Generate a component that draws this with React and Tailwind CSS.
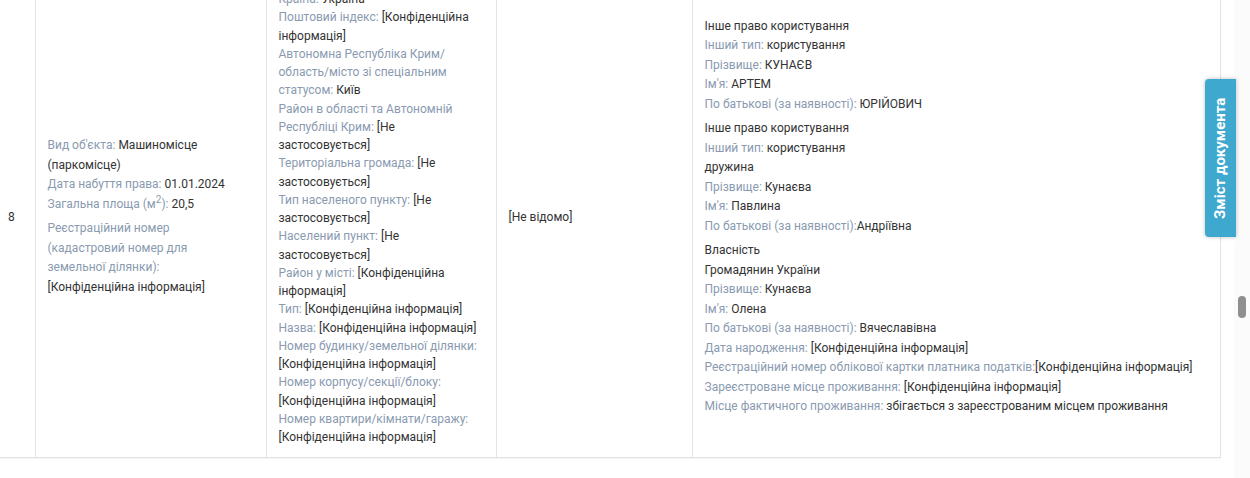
import React from 'react';

const L = ({ children }) => <span className="text-[#8a9ab0]">{children}</span>;

const col2 = [
  ['Країна: ', 'Україна'],
  ['Поштовий індекс: ', '[Конфіденційна інформація]'],
  ['Автономна Республіка Крим/ область/місто зі спеціальним статусом: ', 'Київ'],
  ['Район в області та Автономній Республіці Крим: ', '[Не застосовується]'],
  ['Територіальна громада: ', '[Не застосовується]'],
  ['Тип населеного пункту: ', '[Не застосовується]'],
  ['Населений пункт: ', '[Не застосовується]'],
  ['Район у місті: ', '[Конфіденційна інформація]'],
  ['Тип: ', '[Конфіденційна інформація]'],
  ['Назва: ', '[Конфіденційна інформація]'],
  ['Номер будинку/земельної ділянки: ', '[Конфіденційна інформація]'],
  ['Номер корпусу/секції/блоку: ', '[Конфіденційна інформація]'],
  ['Номер квартири/кімнати/гаражу: ', '[Конфіденційна інформація]'],
];

const owners = [
  [
    [null, 'Інше право користування'],
    ['Інший тип: ', 'користування'],
    ['Прізвище: ', 'КУНАЄВ'],
    ['Ім\'я: ', 'АРТЕМ'],
    ['По батькові (за наявності): ', 'ЮРІЙОВИЧ'],
  ],
  [
    [null, 'Інше право користування'],
    ['Інший тип: ', 'користування'],
    [null, 'дружина'],
    ['Прізвище: ', 'Кунаєва'],
    ['Ім\'я: ', 'Павлина'],
    ['По батькові (за наявності):', 'Андріївна'],
  ],
  [
    [null, 'Власність'],
    [null, 'Громадянин України'],
    ['Прізвище: ', 'Кунаєва'],
    ['Ім\'я: ', 'Олена'],
    ['По батькові (за наявності): ', 'Вячеславівна'],
    ['Дата народження: ', '[Конфіденційна інформація]'],
    ['Реєстраційний номер облікової картки платника податків:', '[Конфіденційна інформація]'],
    ['Зареєстроване місце проживання: ', '[Конфіденційна інформація]'],
    ['Місце фактичного проживання: ', 'збігається з зареєстрованим місцем проживання'],
  ],
];

export default function App() {
  return (
    <div className="relative h-[478px] overflow-hidden bg-white text-[12px] text-[#333] flex" style={{ fontFamily: 'Roboto, "Liberation Sans", sans-serif' }}>
      <div className="flex-1">
        <table className="-mt-[24px] w-[1221px] border-collapse">
          <tbody>
            <tr className="border-b border-[#e3e3e3] shadow-[0_1px_1px_rgba(0,0,0,0.04)]">
              <td className="w-[35px] pl-2 align-middle">8</td>
              <td className="w-[231px] border-x border-[#e3e3e3] pl-3 pr-[30px] align-middle leading-[19.5px]">
                <div>
                  <div><L>Вид об'єкта: </L>Машиномісце (паркомісце)</div>
                  <div><L>Дата набуття права: </L>01.01.2024</div>
                  <div><L>Загальна площа (м<sup className="text-[10px]">2</sup>): </L>20,5</div>
                </div>
                <div className="mt-[5px]">
                  <div><L>Реєстраційний номер (кадастровий номер для земельної ділянки): </L>[Конфіденційна інформація]</div>
                </div>
              </td>
              <td className="w-[230px] border-x border-[#e3e3e3] px-3 pt-[14px] pb-[11px] align-top leading-[18.25px]">
                {col2.map(([l, v], i) => (
                  <div key={i}><L>{l}</L>{v}</div>
                ))}
              </td>
              <td className="w-[196px] border-x border-[#e3e3e3] px-3 align-middle">[Не відомо]</td>
              <td className="border-x border-[#e3e3e3] px-3 align-middle leading-[19.5px]">
                {owners.map((g, gi) => (
                  <div key={gi} className={gi ? 'mt-[5px]' : ''}>
                    {g.map(([l, v], i) => (
                      <div key={i}>{l && <L>{l}</L>}{v}</div>
                    ))}
                  </div>
                ))}
              </td>
            </tr>
          </tbody>
        </table>
      </div>
      <div className="w-[16px] bg-[#fbfbfb]">
        <div className="mt-[296px] ml-[4px] h-[22px] w-[8px] rounded-full bg-[#8f8f8f]" />
      </div>
      <div className="absolute left-[1205px] top-[79px] flex h-[158px] w-[31px] items-center justify-center rounded-l-[4px] bg-[#3fa8cf] shadow-[0_0_4px_rgba(0,0,0,0.25)]">
        <span className="-rotate-90 whitespace-nowrap text-[15px] font-bold text-white">Зміст документа</span>
      </div>
    </div>
  );
}
